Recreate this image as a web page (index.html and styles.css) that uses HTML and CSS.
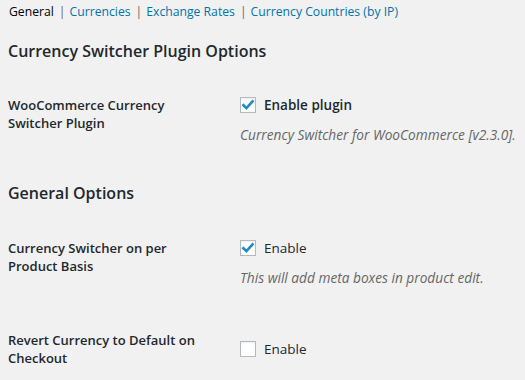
FILE: index.html
```html
<!DOCTYPE html>
<html>
<head>
<meta charset="utf-8">
<link rel="stylesheet" href="styles.css">
</head>
<body>
<div class="wrap">
  <ul class="tabs">
    <li class="current">General</li>
    <li><span class="sep">|</span><a href="#">Currencies</a></li>
    <li><span class="sep">|</span><a href="#">Exchange Rates</a></li>
    <li><span class="sep">|</span><a href="#">Currency Countries (by IP)</a></li>
  </ul>

  <h2 class="section-title first">Currency Switcher Plugin Options</h2>
  <div class="row row-1">
    <div class="label">WooCommerce Currency Switcher Plugin</div>
    <div class="field">
      <label class="check"><span class="box checked"><svg viewBox="0 0 16 16" width="16" height="16"><path d="M3.4 8.2 L6.4 11.2 L12.6 4.4" fill="none" stroke="#1e8cbe" stroke-width="2.6" stroke-linecap="square" stroke-linejoin="miter"/></svg></span>Enable plugin</label>
      <p class="desc">Currency Switcher for WooCommerce [v2.3.0].</p>
    </div>
  </div>

  <h2 class="section-title second">General Options</h2>
  <div class="row row-2">
    <div class="label">Currency Switcher on per Product Basis</div>
    <div class="field">
      <label class="check light"><span class="box checked"><svg viewBox="0 0 16 16" width="16" height="16"><path d="M3.4 8.2 L6.4 11.2 L12.6 4.4" fill="none" stroke="#1e8cbe" stroke-width="2.6" stroke-linecap="square" stroke-linejoin="miter"/></svg></span>Enable</label>
      <p class="desc">This will add meta boxes in product edit.</p>
    </div>
  </div>
  <div class="row row-3">
    <div class="label">Revert Currency to Default on Checkout</div>
    <div class="field">
      <label class="check light"><span class="box"></span>Enable</label>
    </div>
  </div>
</div>
</body>
</html>
```

FILE: styles.css
```css
html, body {
  margin: 0;
  padding: 0;
  background: #f1f1f1;
}
body {
  font-family: "Open Sans", "Noto Sans", sans-serif;
  color: #23282d;
  font-size: 13px;
}
.wrap {
  padding: 0 8px;
}
.tabs {
  list-style: none;
  margin: 0;
  padding: 3px 0 0 1px;
  display: flex;
  font-size: 12.2px;
  line-height: 18px;
  color: #555;
}
.tabs li {
  margin: 0;
}
.tabs .current {
  color: #000;
  margin-right: 5px;
}
.tabs .sep {
  color: #666;
  margin-right: 4px;
}
.tabs a {
  color: #0073aa;
  text-decoration: none;
  margin-right: 5px;
}
.section-title {
  font-size: 16px;
  font-weight: 600;
  line-height: 22px;
  margin: 0;
  color: #23282d;
}
.section-title.first {
  margin-top: 19px;
}
.section-title.second {
  margin-top: 38px;
}
.row {
  display: grid;
  grid-template-columns: 232px 1fr;
}
.label {
  font-size: 13px;
  font-weight: 600;
  line-height: 18px;
  width: 200px;
}
.row-1 { margin-top: 34px; }
.row-2 { margin-top: 35px; }
.row-3 { margin-top: 44px; }
.row-3 .field { padding-top: 9px; }
.field {
  font-size: 13.5px;
  min-width: 0;
}
.check {
  display: flex;
  align-items: center;
  gap: 8px;
  line-height: 18px;
  font-weight: 600;
}
.check.light {
  font-weight: 400;
}
.box {
  width: 16px;
  height: 16px;
  box-sizing: border-box;
  border: 1px solid #b4b9be;
  background: #fff;
  box-shadow: inset 0 1px 2px rgba(0,0,0,0.07);
  position: relative;
  flex: none;
}
.box svg {
  position: absolute;
  left: -1px;
  top: -1px;
}
.desc {
  margin: 12px 0 0;
  font-size: 13.7px;
  font-style: italic;
  color: #666;
  line-height: 18px;
  white-space: nowrap;
}
```
